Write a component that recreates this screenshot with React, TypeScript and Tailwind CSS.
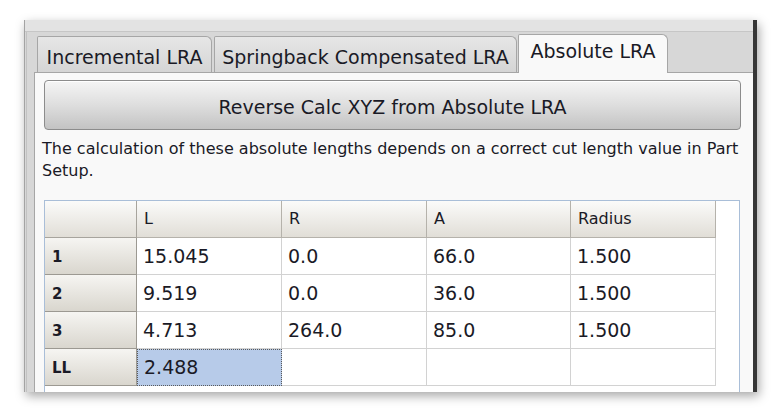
import React from 'react';

const cols = [
	{ name: 'L', w: 'w-[145px]' },
	{ name: 'R', w: 'w-[145px]' },
	{ name: 'A', w: 'w-[144px]' },
	{ name: 'Radius', w: 'w-[145px]' }
];

const rows = [
	{ label: '1', vals: ['15.045', '0.0', '66.0', '1.500'] },
	{ label: '2', vals: ['9.519', '0.0', '36.0', '1.500'] },
	{ label: '3', vals: ['4.713', '264.0', '85.0', '1.500'] },
	{ label: 'LL', vals: ['2.488', '', '', ''] }
];

const App = () => {
	return (
		<div className="w-[781px] h-[414px] bg-white overflow-hidden font-['DejaVu_Sans',sans-serif] text-[#1a1a26]">
			{/* window */}
			<div className="ml-[24px] mt-[20px] w-[733px] h-[372px] flex flex-col bg-[#d7d7d7] border-l border-l-[#a3a3a3] border-r-[4px] border-r-[#363636] shadow-[2px_4px_10px_rgba(0,0,0,0.35)]">
				<div className="h-[12px] bg-[#e3e3e3] border-b border-[#c6c6c6]" />

				<div className="flex-1 flex flex-col ml-[1px] border-l border-l-[#c2c2c2]">
					{/* tabs */}
					<div className="h-[40px] flex items-end pl-[10px]">
						<div className="w-[175px] h-[36px] pt-[9px] text-center text-[19px] leading-[22px] bg-gradient-to-b from-[#e6e6e6] to-[#d5d5d5] border border-b-0 border-[#a6a6a6] rounded-tl-[2px] rounded-tr-[6px]">
							Incremental LRA
						</div>
						<div className="ml-[2px] w-[303px] h-[36px] pt-[9px] text-center text-[19px] leading-[22px] bg-gradient-to-b from-[#e6e6e6] to-[#d5d5d5] border border-b-0 border-[#a6a6a6] rounded-tl-[2px] rounded-tr-[6px]">
							Springback Compensated LRA
						</div>
						<div className="relative z-10 -mb-[1px] ml-[1px] w-[150px] h-[39px] pt-[5px] text-center text-[19px] leading-[22px] bg-[#f9f9f9] border border-b-0 border-[#a6a6a6] rounded-tl-[2px] rounded-tr-[6px]">
							Absolute LRA
						</div>
					</div>

					{/* panel */}
					<div className="flex-1 ml-[7px] flex flex-col bg-[#f9f9f9] border-l border-t border-[#a6a6a6] pl-[9px] pt-[7px] pr-[11px] overflow-hidden">
						<div className="h-[50px] w-[697px] pt-[15px] text-center text-[19px] leading-[22px] rounded-[4px] border border-[#8c8c8c] bg-gradient-to-b from-[#f5f5f5] via-[#dedede] to-[#c3c3c3] shadow-[0_1px_0_#ffffff_inset]">
							Reverse Calc XYZ from Absolute LRA
						</div>

						<p className="mt-[8px] -ml-[2px] text-[16px] leading-[22px] whitespace-nowrap">
							The calculation of these absolute lengths depends on a correct cut length value in Part
							<br />
							Setup.
						</p>

						{/* table */}
						<div className="mt-[18px] w-[696px] flex-1 bg-white border-l border-t border-r border-[#a9bed8] flex flex-col">
							<div className="flex h-[37px]">
								<div className="w-[92px] border-r border-b border-[#a7a49d] bg-gradient-to-b from-[#fbfbfa] to-[#e1ded7]" />
								{cols.map((c, i) => (
									<div
										key={i}
										className={`${c.w} flex items-center pl-[7px] text-[16px] border-r border-b border-[#b5b2ab] bg-gradient-to-b from-[#fbfbfa] to-[#e1ded7]`}
									>
										{c.name}
									</div>
								))}
							</div>

							{rows.map((r, ri) => (
								<div key={ri} className="flex h-[37px]">
									<div className="w-[92px] flex items-center pl-[7px] pt-[2px] text-[15px] font-bold border-r border-b border-[#9c9992] bg-gradient-to-b from-[#f6f5f2] to-[#d9d6ce]">
										{r.label}
									</div>
									{r.vals.map((v, vi) =>
										ri === 3 && vi === 0 ? (
											<div
												key={vi}
												className={`${cols[vi].w} flex items-center pl-[6px] text-[19px] bg-[#b7cbe9] border border-dotted border-[#5a5a5a]`}
											>
												{v}
											</div>
										) : (
											<div
												key={vi}
												className={`${cols[vi].w} flex items-center pl-[6px] text-[19px] border-r border-b border-[#d2d2d2]`}
											>
												{v}
											</div>
										)
									)}
								</div>
							))}
						</div>
					</div>
				</div>
			</div>
		</div>
	);
};

export default App;
